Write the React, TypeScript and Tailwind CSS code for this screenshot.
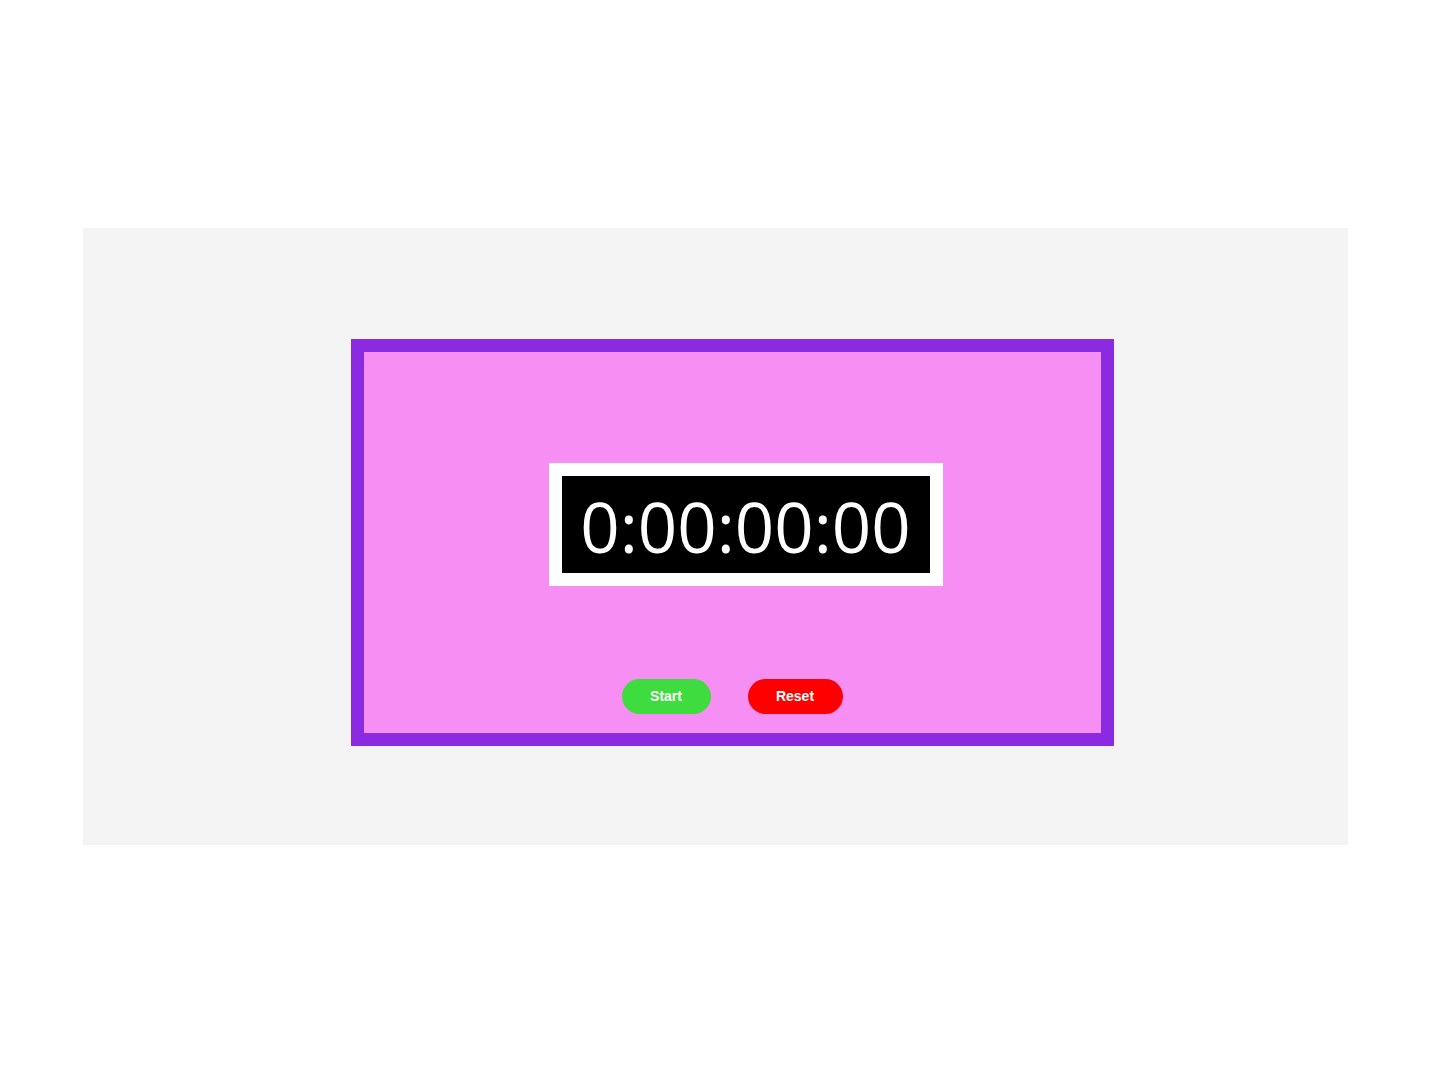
export default function App() {
  return (
    <div className="min-h-screen bg-white flex items-center justify-center">
      <div className="w-[1265px] h-[617px] mr-[2px] mb-[2px] bg-[#f4f4f4] flex items-center justify-center pl-[34px] pt-[12px]">
        <div className="w-[763px] h-[407px] border-[13px] border-[#8a2be2] bg-[#f68ef4] flex flex-col items-center">
          <div className="mt-[111px] ml-[27px] border-[13px] border-white bg-black w-[394px] h-[123px] flex items-center justify-center">
            <span
              className="text-white text-[69px] leading-none pt-[5px]"
              style={{ fontFamily: '"Open Sans", "Noto Sans", sans-serif' }}
            >
              0:00:00:00
            </span>
          </div>
          <div className="mt-[93px] flex gap-[37px]">
            <button
              className="w-[89px] h-[35px] rounded-full bg-[#3fdc3f] text-white text-[14px] font-bold"
              style={{ fontFamily: '"Liberation Sans", Arial, sans-serif' }}
            >
              Start
            </button>
            <button
              className="w-[95px] h-[35px] rounded-full bg-[#ff0000] text-white text-[14px] font-bold"
              style={{ fontFamily: '"Liberation Sans", Arial, sans-serif' }}
            >
              Reset
            </button>
          </div>
        </div>
      </div>
    </div>
  );
}
